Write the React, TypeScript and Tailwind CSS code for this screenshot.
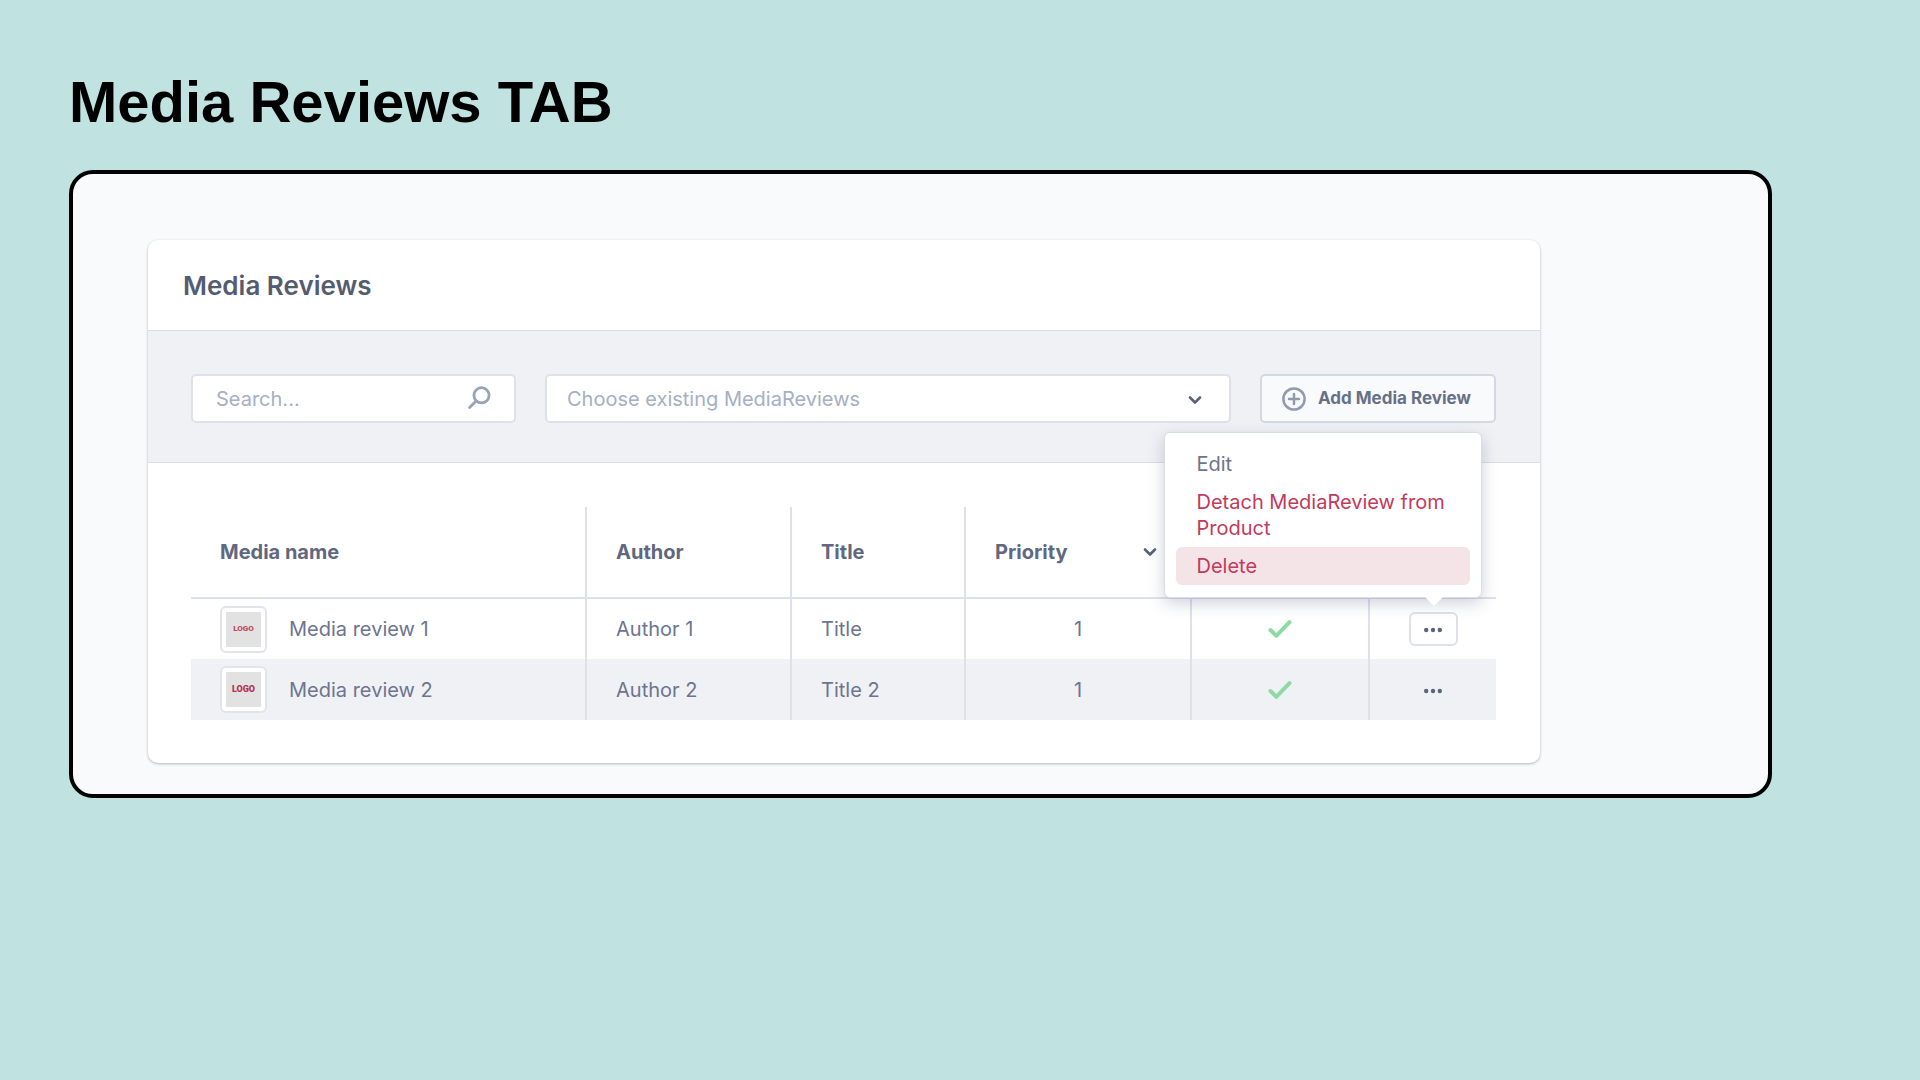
import { clsx } from "clsx";

const reviews = [
  {
    id: 1,
    name: "Media review 1",
    author: "Author 1",
    title: "Title",
    priority: 1,
    menuOpen: true,
    logoClass: "text-[8px] text-[#bf4a5c]",
  },
  {
    id: 2,
    name: "Media review 2",
    author: "Author 2",
    title: "Title 2",
    priority: 1,
    menuOpen: false,
    logoClass: "text-[9px] text-[#b5304d]",
  },
];

function SearchIcon() {
  return (
    <svg
      width="24"
      height="24"
      viewBox="0 0 24 24"
      fill="none"
      stroke="#98a3b8"
      strokeWidth="2.8"
      strokeLinecap="round"
    >
      <circle cx="14.5" cy="9.3" r="7.6" />
      <path d="M9 15 2.6 21.4" />
    </svg>
  );
}

function PlusCircleIcon() {
  return (
    <svg
      width="24"
      height="24"
      viewBox="0 0 24 24"
      fill="none"
      stroke="#909bb2"
      strokeWidth="2.5"
      strokeLinecap="round"
    >
      <circle cx="12" cy="12" r="10.6" />
      <path d="M12 7v10M7 12h10" />
    </svg>
  );
}

function ChevronIcon() {
  return (
    <svg
      width="14"
      height="10"
      viewBox="0 0 14 10"
      fill="none"
      stroke="#58627a"
      strokeWidth="2.6"
      strokeLinecap="round"
      strokeLinejoin="round"
    >
      <path d="m2 2.5 5 5 5-5" />
    </svg>
  );
}

function CheckIcon() {
  return (
    <svg
      role="img"
      aria-label="Yes"
      className="mx-auto"
      width="24"
      height="20"
      viewBox="0 0 24 20"
      fill="none"
      stroke="#8ddaa5"
      strokeWidth="4"
      strokeLinecap="round"
      strokeLinejoin="round"
    >
      <path d="m2.5 11 5.8 5.8L21.5 3.2" />
    </svg>
  );
}

function DotsIcon() {
  return (
    <svg width="20" height="6" viewBox="0 0 20 6" fill="#5a647b">
      <circle cx="3.2" cy="3" r="2.2" />
      <circle cx="10" cy="3" r="2.2" />
      <circle cx="16.8" cy="3" r="2.2" />
    </svg>
  );
}

function ContextMenu() {
  const item = "block w-full rounded-md px-[21px] py-1.5 text-left leading-[26px]";

  return (
    <div
      role="menu"
      className="absolute -right-6 bottom-full z-10 mb-[14px] w-[318px] rounded-md border border-[#d8dce6] bg-white px-[11px] py-3 text-xl shadow-[0_5px_16px_rgba(60,70,110,0.25)]"
    >
      <button role="menuitem" className={clsx(item, "text-[#6c7590]")}>
        Edit
      </button>
      <button role="menuitem" className={clsx(item, "text-[#c23a5c]")}>
        Detach MediaReview from Product
      </button>
      <button
        role="menuitem"
        className={clsx(item, "bg-[#f4e3e7] text-[#c23a5c]")}
      >
        Delete
      </button>
      <svg
        className="absolute right-[37px] top-full"
        width="20"
        height="10"
        viewBox="0 0 20 10"
      >
        <path d="M1 0h18l-9 9z" fill="#fff" />
      </svg>
    </div>
  );
}

export default function App() {
  const th = "border-b-2 border-[#dfe1ea] pl-[29px] font-bold text-[#5f6880]";
  const divider = "border-r-2 border-[#dfe1ea]";

  return (
    <main className="min-h-screen bg-[#c0e2e0] pb-16 pl-[69px] pr-[148px] pt-[70px] font-['Inter',sans-serif]">
      <h1 className="text-[58px] font-bold leading-[64px] text-black font-['Liberation_Sans',Arial,sans-serif]">
        Media Reviews TAB
      </h1>

      <div className="mt-9 rounded-3xl border-4 border-black bg-[#f9fafc] pb-[31px] pl-[75px] pr-[228px] pt-[66px]">
        <section className="rounded-[10px] bg-white shadow-[0_1px_3px_rgba(0,0,0,0.28)]">
          <h2 className="px-[35px] pb-[26px] pt-7 text-[26px] font-semibold leading-9 text-[#545c70]">
            Media Reviews
          </h2>

          {/* Toolbar */}
          <div className="flex gap-[29px] border-y border-[#dadce7] bg-[#f0f1f5] pb-[39px] pl-[43px] pr-11 pt-[43px] text-xl">
            <div className="relative w-[325px]">
              <input
                type="text"
                aria-label="Search"
                placeholder="Search..."
                className="h-[49px] w-full rounded-[5px] border-2 border-[#dfe1ea] bg-white pl-[23px] pr-14 text-[#6c7590] placeholder:text-[#a6afc4]"
              />
              <span className="pointer-events-none absolute right-[25px] top-3">
                <SearchIcon />
              </span>
            </div>

            <div className="relative flex-1">
              <select
                aria-label="Choose existing MediaReviews"
                className="h-[49px] w-full appearance-none rounded-[5px] border-2 border-[#dfe1ea] bg-white pl-5 pr-14 text-[#a6afc4]"
              >
                <option>Choose existing MediaReviews</option>
              </select>
              <span className="pointer-events-none absolute right-[29px] top-[21px]">
                <ChevronIcon />
              </span>
            </div>

            <button className="flex h-[49px] w-[236px] items-center gap-3 whitespace-nowrap rounded-[5px] border-2 border-[#d4d8e1] bg-[#f9fafc] pl-5 text-[17px] font-bold text-[#667087]">
              <PlusCircleIcon />
              Add Media Review
            </button>
          </div>

          {/* Reviews table */}
          <div className="pb-[43px] pl-[43px] pr-11 pt-11">
            <table className="w-full table-fixed text-left text-xl text-[#6c7590]">
              <colgroup>
                <col />
                <col className="w-[205px]" />
                <col className="w-[174px]" />
                <col className="w-[226px]" />
                <col className="w-[178px]" />
                <col className="w-[127px]" />
              </colgroup>
              <thead>
                <tr className="h-[91px]">
                  <th className={clsx(th, "border-r-2")}>Media name</th>
                  <th className={clsx(th, "border-r-2")}>Author</th>
                  <th className={clsx(th, "border-r-2")}>Title</th>
                  <th className={clsx(th, "border-r-2")}>
                    <div className="flex items-center justify-between pr-[33px]">
                      Priority
                      <ChevronIcon />
                    </div>
                  </th>
                  <th className={clsx(th, "border-r-2")} />
                  <th className={th} />
                </tr>
              </thead>
              <tbody>
                {reviews.map((review) => (
                  <tr key={review.id} className="h-[61px] even:bg-[#f0f1f5]">
                    <td className={clsx(divider, "pl-[29px]")}>
                      <div className="flex items-center gap-[22px]">
                        <div className="size-[47px] rounded-md border-2 border-[#e1e4eb] bg-white p-1">
                          <div
                            className={clsx(
                              "flex h-full items-center justify-center bg-[#e2e2e2] font-black leading-none font-['Roboto',sans-serif]",
                              review.logoClass
                            )}
                          >
                            LOGO
                          </div>
                        </div>
                        {review.name}
                      </div>
                    </td>
                    <td className={clsx(divider, "pl-[29px]")}>
                      {review.author}
                    </td>
                    <td className={clsx(divider, "pl-[29px]")}>
                      {review.title}
                    </td>
                    <td className={clsx(divider, "text-center")}>
                      {review.priority}
                    </td>
                    <td className={divider}>
                      <CheckIcon />
                    </td>
                    <td>
                      <div className="relative mx-auto w-[49px]">
                        <button
                          aria-label="Open menu"
                          aria-expanded={review.menuOpen}
                          className={clsx(
                            "flex h-[34px] w-full items-center justify-center rounded-md border-2 pt-0.5",
                            review.menuOpen
                              ? "border-[#dfe1ea] bg-white"
                              : "border-transparent"
                          )}
                        >
                          <DotsIcon />
                        </button>
                        {review.menuOpen && <ContextMenu />}
                      </div>
                    </td>
                  </tr>
                ))}
              </tbody>
            </table>
          </div>
        </section>
      </div>
    </main>
  );
}
